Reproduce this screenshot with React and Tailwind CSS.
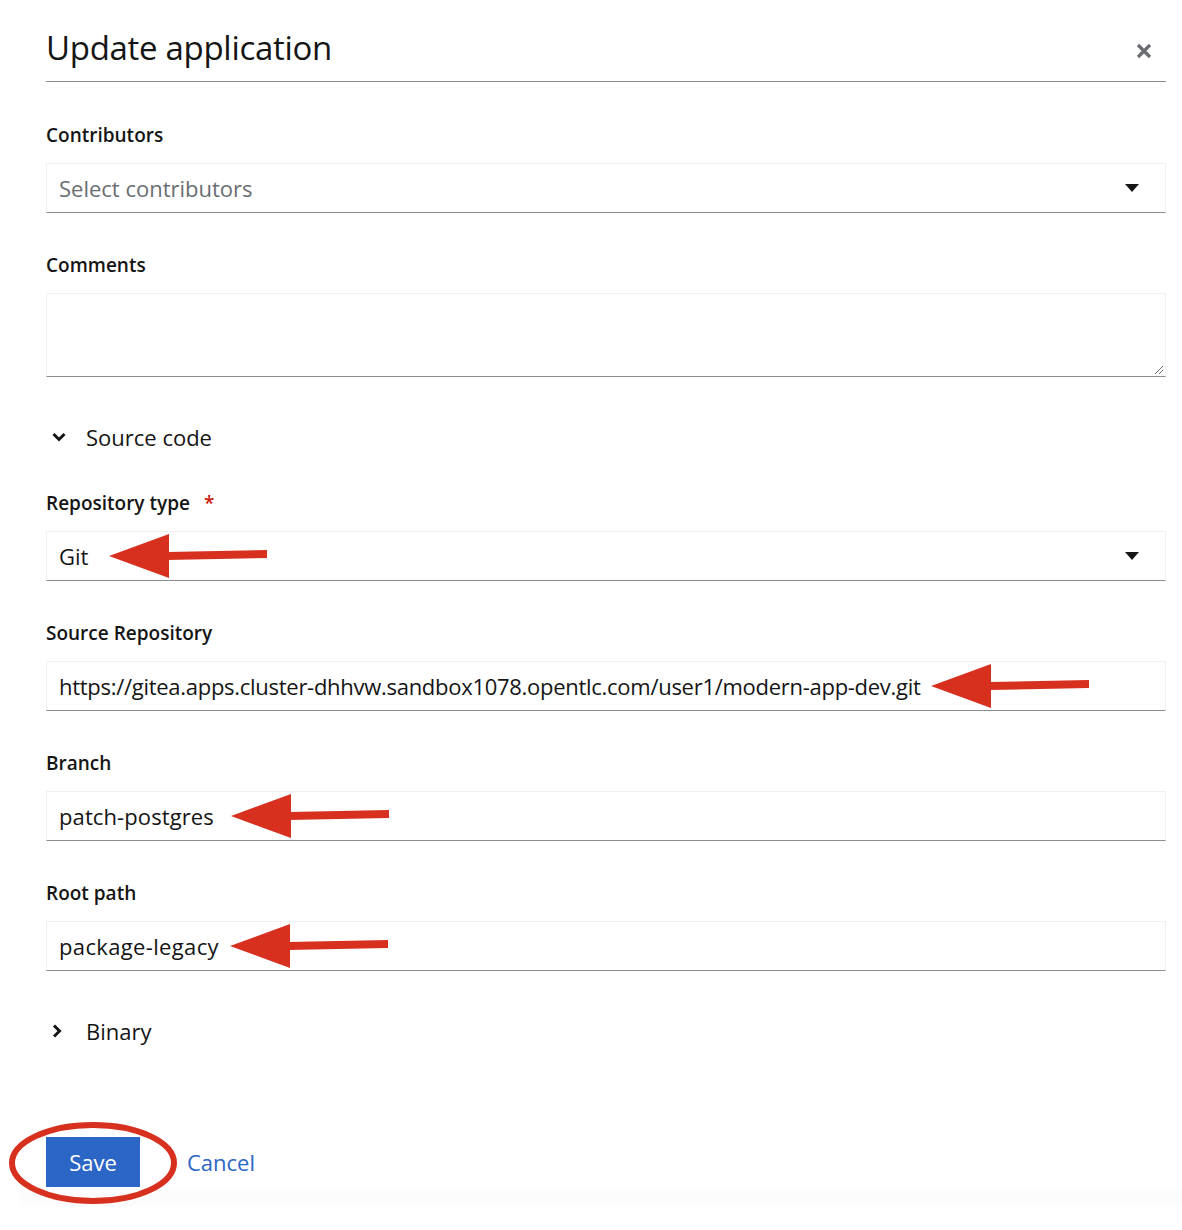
import { useState } from 'react'

const FONT = { fontFamily: '"Open Sans", "Liberation Sans", sans-serif' }

function Arrow({ className = '' }) {
  return (
    <svg width="160" height="46" viewBox="0 0 160 46" className={className}>
      <polygon points="0,23 60,1 60,45" fill="#d8301f" />
      <polygon points="58,19 158,17 158,25 58,27" fill="#d8301f" />
    </svg>
  )
}

function Caret() {
  return (
    <svg width="14" height="9" viewBox="0 0 14 9" className="shrink-0">
      <polygon points="0,0 14,0 7,8" fill="#151515" />
    </svg>
  )
}

function Label({ children, required, className = '' }) {
  return (
    <div className={`text-[19px] leading-[28px] font-semibold text-[#151515] ${className}`}>
      {children}
      {required && <span className="ml-[14px] text-[#c9190b]">*</span>}
    </div>
  )
}

function Box({ children, className = '' }) {
  return (
    <div
      className={`h-[50px] flex items-center border border-[#f0f0f0] border-b-[1.5px] border-b-[#8a8d90] bg-white pl-[12px] pr-[26px] text-[22px] text-[#151515] ${className}`}
    >
      {children}
    </div>
  )
}

function Toggle({ open, label, className = '' }) {
  return (
    <div className={`h-[32px] flex items-center text-[22px] text-[#151515] ${className}`}>
      <span className="w-[40px] flex items-center pl-[6px]">
        {open ? (
          <svg width="14" height="10" viewBox="0 0 14 10">
            <path d="M1.5 2 L7 7.5 L12.5 2" fill="none" stroke="#151515" strokeWidth="3" />
          </svg>
        ) : (
          <svg width="10" height="14" viewBox="0 0 10 14">
            <path d="M2 1.5 L7.5 7 L2 12.5" fill="none" stroke="#151515" strokeWidth="3" />
          </svg>
        )}
      </span>
      {label}
    </div>
  )
}

export default function App() {
  const [comments, setComments] = useState('')

  return (
    <div className="min-h-[1230px] bg-white" style={FONT}>
      <div className="pl-[46px] pr-[16px] pt-[28px]">
        <div className="flex items-center justify-between border-b-[1.5px] border-[#8a8d90] pb-[13px]">
          <h1 className="text-[33px] leading-[40px] font-medium text-[#151515] tracking-[-0.3px]">
            Update application
          </h1>
          <svg width="16" height="16" viewBox="0 0 16 16" className="mr-[14px] mt-[6px]">
            <path d="M2 2 L14 14 M14 2 L2 14" stroke="#6a6e73" strokeWidth="3.2" />
          </svg>
        </div>

        <Label className="mt-[39px]">Contributors</Label>
        <Box className="mt-[14px] justify-between">
          <span className="text-[#6a6e73]">Select contributors</span>
          <Caret />
        </Box>

        <Label className="mt-[38px]">Comments</Label>
        <div className="relative mt-[14px] h-[84px] border border-[#f0f0f0] border-b-[1.5px] border-b-[#8a8d90]">
          <textarea
            value={comments}
            onChange={(e) => setComments(e.target.value)}
            className="w-full h-full resize-none outline-none px-[12px] py-[8px] text-[22px]"
          />
          <svg width="10" height="10" viewBox="0 0 10 10" className="absolute right-[1px] bottom-[1px]">
            <path d="M1 9 L9 1 M5 9 L9 5" stroke="#6a6e73" strokeWidth="1" />
          </svg>
        </div>

        <Toggle open label="Source code" className="mt-[44px]" />

        <Label required className="mt-[36px]">Repository type</Label>
        <Box className="mt-[14px] justify-between">
          <span className="flex items-center">
            Git
            <Arrow className="ml-[21px]" />
          </span>
          <Caret />
        </Box>

        <Label className="mt-[38px]">Source Repository</Label>
        <Box className="mt-[14px]">
          <span className="tracking-[-0.28px]">
            https://gitea.apps.cluster-dhhvw.sandbox1078.opentlc.com/user1/modern-app-dev.git
          </span>
          <Arrow className="ml-[10px]" />
        </Box>

        <Label className="mt-[38px]">Branch</Label>
        <Box className="mt-[14px]">
          <span className="tracking-[0.1px]">patch-postgres</span>
          <Arrow className="ml-[17px]" />
        </Box>

        <Label className="mt-[38px]">Root path</Label>
        <Box className="mt-[14px]">
          <span className="tracking-[0.35px]">package-legacy</span>
          <Arrow className="ml-[11px]" />
        </Box>

        <Toggle label="Binary" className="mt-[44px]" />

        <div className="mt-[90px] flex items-center gap-[47px]">
          <div className="relative">
            <button className="h-[50px] w-[94px] bg-[#2b66c6] text-white text-[22px]">Save</button>
            <svg
              width="172"
              height="86"
              viewBox="0 0 172 86"
              className="absolute left-[-39px] top-[-17px] pointer-events-none"
            >
              <ellipse cx="86" cy="43" rx="81" ry="38" fill="none" stroke="#d8301f" strokeWidth="6" />
            </svg>
          </div>
          <span className="text-[22px] text-[#2b66c6]">Cancel</span>
        </div>
      </div>
      <div className="ml-[20px] mt-[2px] h-[18px] bg-[#fcfcfc]" />
    </div>
  )
}
